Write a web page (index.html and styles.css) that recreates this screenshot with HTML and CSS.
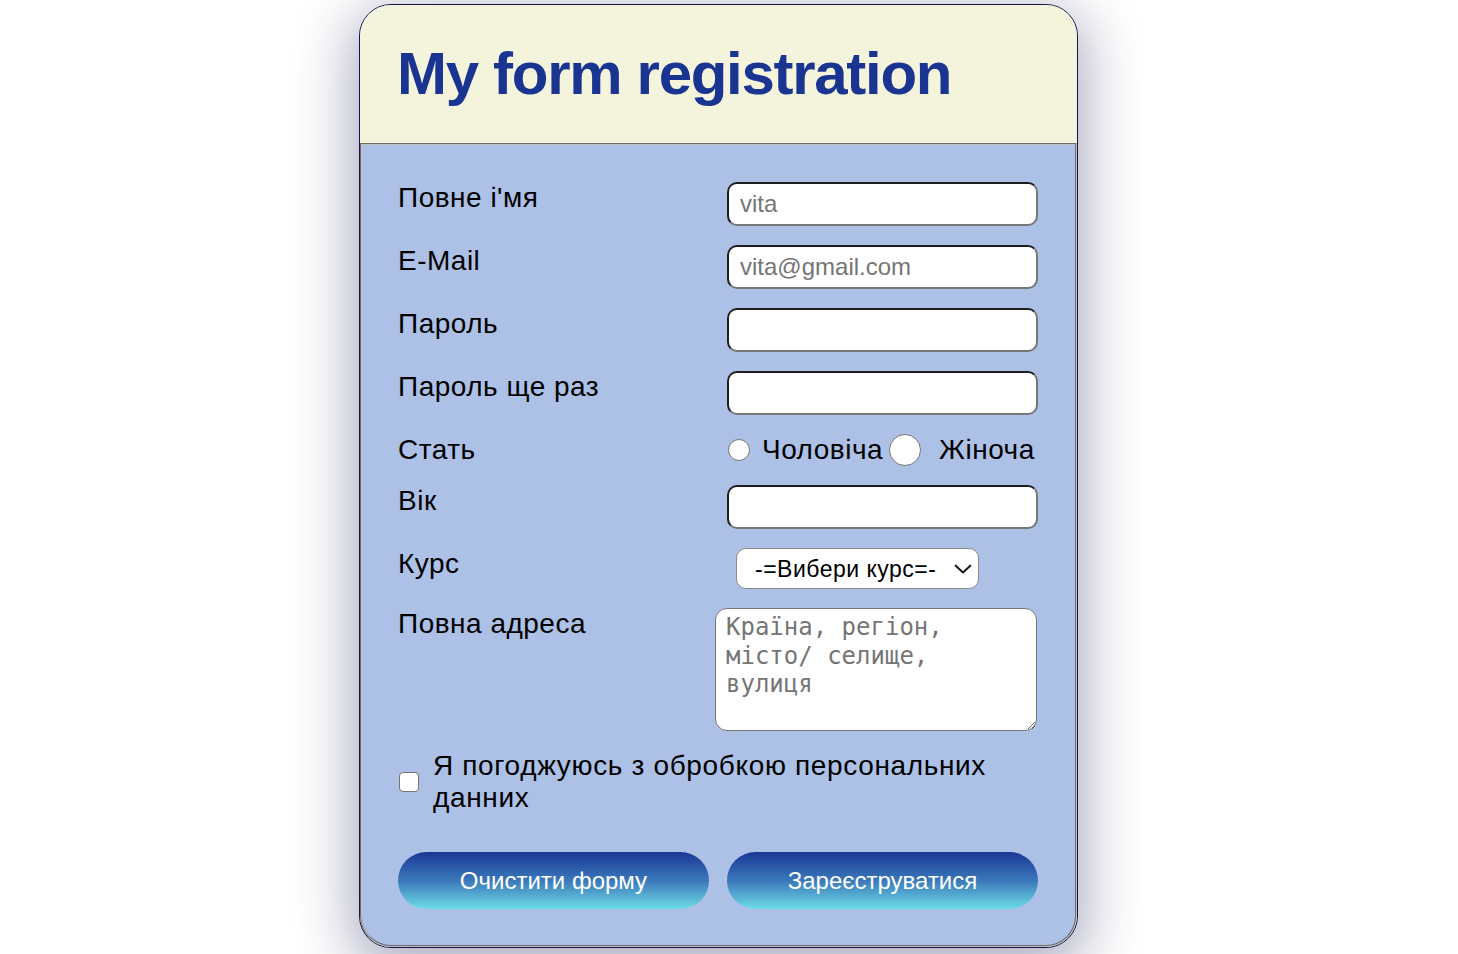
FILE: index.html
```html
<!DOCTYPE html>
<html lang="uk">
<head>
<meta charset="utf-8">
<title>My form registration</title>
<link rel="stylesheet" href="styles.css">
</head>
<body>
<div class="card">
  <header class="card-header">
    <h1 class="title">My form registration</h1>
  </header>
  <form class="form">
    <fieldset class="fields">
      <label class="lbl" for="name">Повне і'мя</label>
      <input class="txt" id="name" type="text" placeholder="vita">

      <label class="lbl" for="email">E-Mail</label>
      <input class="txt" id="email" type="email" placeholder="vita@gmail.com">

      <label class="lbl" for="pass">Пароль</label>
      <input class="txt" id="pass" type="password">

      <label class="lbl" for="pass2">Пароль ще раз</label>
      <input class="txt" id="pass2" type="password">

      <span class="lbl">Стать</span>
      <div class="radios">
        <input class="radio radio-sm" type="radio" name="sex" id="m">
        <label class="radio-lbl" for="m">Чоловіча</label>
        <input class="radio radio-lg" type="radio" name="sex" id="f">
        <label class="radio-lbl radio-lbl-f" for="f">Жіноча</label>
      </div>

      <label class="lbl" for="age">Вік</label>
      <input class="txt" id="age" type="number">

      <label class="lbl" for="course">Курс</label>
      <div class="select-wrap">
        <select class="sel" id="course">
          <option>-=Вибери курс=-</option>
        </select>
        <svg class="chev" width="18" height="10" viewBox="0 0 18 10"><path d="M1.5 1.5 L9 8.5 L16.5 1.5" fill="none" stroke="#111" stroke-width="1.8" stroke-linecap="round" stroke-linejoin="round"/></svg>
      </div>

      <label class="lbl" for="addr">Повна адреса</label>
      <textarea class="area" id="addr" placeholder="Країна, регіон, місто/ селище, вулиця"></textarea>

      <div class="agree">
        <input class="check" type="checkbox" id="agree">
        <label class="agree-lbl" for="agree">Я погоджуюсь з обробкою персональних данних</label>
      </div>

      <button class="btn" type="reset">Очистити форму</button>
      <button class="btn" type="submit">Зареєструватися</button>
    </fieldset>
  </form>
</div>
</body>
</html>
```

FILE: styles.css
```css
html, body {
  margin: 0;
  padding: 0;
  background: #ffffff;
}

body {
  font-family: "Liberation Sans", Arial, sans-serif;
  color: #000;
  padding-top: 4px;
  padding-bottom: 20px;
}

.card {
  width: 717px;
  margin-left: 359px;
  border: 1px solid #15154a;
  border-radius: 32px;
  overflow: hidden;
  box-shadow: 0 14px 55px 8px rgba(40, 40, 95, 0.38);
  background: #adc0e6;
}

.card-header {
  background: #f4f4dd;
  height: 138px;
  box-sizing: border-box;
  padding: 39px 37px;
}

.title {
  margin: 0;
  font-size: 60px;
  line-height: 60px;
  font-weight: bold;
  letter-spacing: -1.3px;
  color: #1a3491;
}

.form {
  margin: 0;
}

.fields {
  margin: 0;
  min-width: 0;
  border: 2px groove #c0c0c0;
  border-radius: 0 0 31px 31px;
  background: #adc0e6;
  padding: 37px 36px 36px 36px;
  display: grid;
  grid-template-columns: 311px 311px;
  column-gap: 18px;
  row-gap: 19px;
  align-items: start;
}

.lbl {
  font-size: 28px;
  line-height: 32px;
  letter-spacing: 0.5px;
}

.txt {
  box-sizing: border-box;
  width: 311px;
  height: 44px;
  margin: 0;
  padding: 0 11px;
  border: 2px solid;
  border-color: #1e1e1e #767676 #767676 #1e1e1e;
  border-radius: 10px;
  background: #fff;
  font-family: "Liberation Sans", Arial, sans-serif;
  font-size: 24px;
  color: #000;
  outline: none;
}

.txt::placeholder {
  color: #757575;
}

.txt::-webkit-inner-spin-button,
.txt::-webkit-outer-spin-button {
  -webkit-appearance: none;
  margin: 0;
}

.radios {
  display: flex;
  align-items: center;
  height: 32px;
  font-size: 28px;
  letter-spacing: 0.5px;
}

.radio {
  -webkit-appearance: none;
  appearance: none;
  margin: 0;
  box-sizing: border-box;
  border: 1px solid #767676;
  border-radius: 50%;
  background: #fff;
}

.radio-sm {
  width: 22px;
  height: 22px;
  margin-left: 1px;
  margin-right: 12px;
}

.radio-lg {
  width: 32px;
  height: 32px;
  margin-left: 6px;
  margin-right: 18px;
}

.radio-lbl {
  line-height: 32px;
}

.select-wrap {
  position: relative;
  margin-left: 9px;
  width: 243px;
  height: 41px;
}

.sel {
  -webkit-appearance: none;
  appearance: none;
  box-sizing: border-box;
  width: 243px;
  height: 41px;
  margin: 0;
  padding: 0 40px 0 18px;
  border: 1px solid #8a8a8a;
  border-radius: 10px;
  background: #fff;
  font-family: "Liberation Sans", Arial, sans-serif;
  font-size: 23px;
  letter-spacing: 0.5px;
  color: #000;
}

.chev {
  position: absolute;
  right: 7px;
  top: 16px;
  pointer-events: none;
}

.area {
  box-sizing: border-box;
  width: 322px;
  height: 123px;
  margin: 0 0 0 -12px;
  padding: 4px 10px;
  border: 1px solid #767676;
  border-radius: 12px;
  background: #fff;
  font-family: "DejaVu Sans Mono", "Liberation Mono", monospace;
  font-size: 24px;
  line-height: 28.5px;
  resize: both;
}

.area::placeholder {
  color: #757575;
}

.agree {
  grid-column: 1 / -1;
  display: flex;
  align-items: center;
  gap: 14px;
}

.check {
  -webkit-appearance: none;
  appearance: none;
  flex: none;
  box-sizing: border-box;
  width: 20px;
  height: 20px;
  margin: 0 0 0 1px;
  border: 1px solid #767676;
  border-radius: 4px;
  background: #fff;
}

.agree-lbl {
  font-size: 28px;
  line-height: 32px;
  letter-spacing: 0.65px;
}

.btn {
  height: 57px;
  margin-top: 19px;
  border: none;
  border-radius: 29px;
  background: linear-gradient(180deg, #1a3794 0%, #3a78ba 50%, #6ddce6 100%);
  color: #fff;
  font-family: "Liberation Sans", Arial, sans-serif;
  font-size: 24px;
  cursor: pointer;
}
```
